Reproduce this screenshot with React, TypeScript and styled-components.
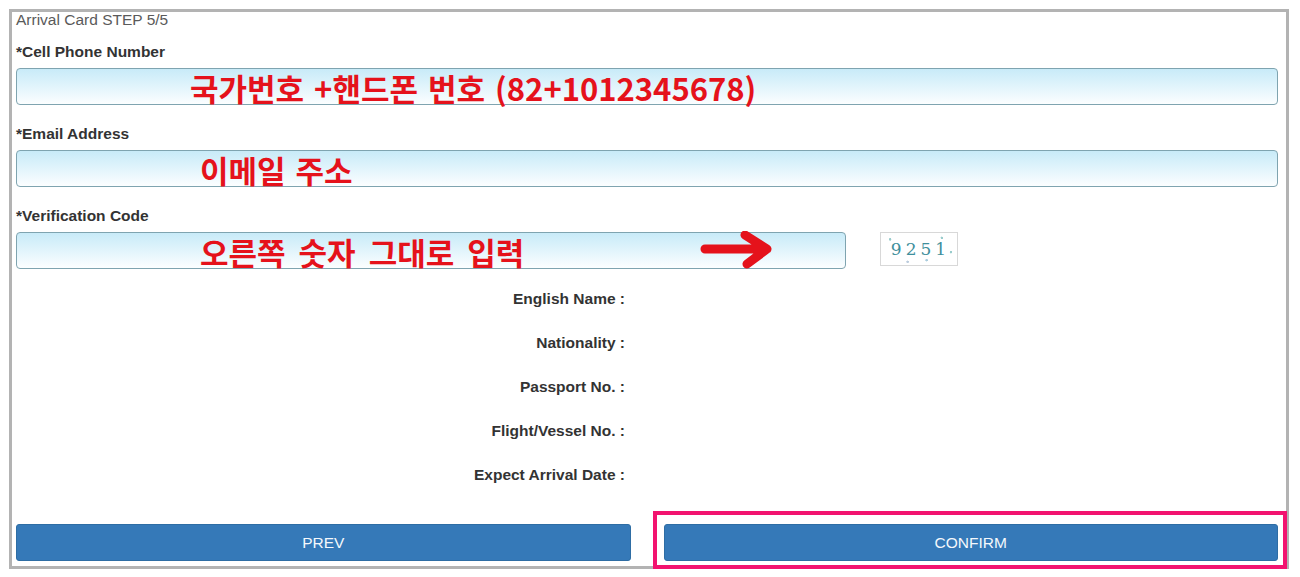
import * as React from 'react'
import styled, { createGlobalStyle } from 'styled-components'

const GlobalStyle = createGlobalStyle`
  html, body {
    margin: 0;
    padding: 0;
    background: #ffffff;
  }
  body {
    font-family: "Liberation Sans", Arial, sans-serif;
  }
`

const Page = styled.div`
  position: relative;
  width: 1300px;
  height: 577px;
  padding: 9px 11px 8px 9px;
  box-sizing: border-box;
`

const Frame = styled.div`
  box-sizing: border-box;
  height: 560px;
  border: 3px solid #b3b3b3;
  padding: 0 8px 0 4px;
  overflow: hidden;
  background: #fff;
`

const StepTitle = styled.div`
  margin-top: -1px;
  font-size: 15.5px;
  line-height: 18px;
  color: #5a5a5a;
`

const Label = styled.div`
  margin-top: 14px;
  font-size: 15.5px;
  line-height: 18px;
  font-weight: bold;
  color: #333;
`

const FieldRow = styled.div<{ $gap?: number }>`
  display: flex;
  align-items: flex-start;
  gap: ${p => p.$gap || 0}px;
  margin-top: 7px;
  margin-bottom: 20px;
`

const Field = styled.div<{ $width?: number }>`
  position: relative;
  flex: ${p => (p.$width ? `0 0 ${p.$width}px` : '1 1 auto')};
`

const Input = styled.div`
  box-sizing: border-box;
  height: 37px;
  border: 1px solid #7fa4b0;
  border-radius: 4px;
  background: linear-gradient(to bottom, #c8ebf8 0%, #e4f5fc 55%, #fcfeff 100%);
`

const Note = styled.span<{ $left: number; $spacing?: number }>`
  position: absolute;
  top: 50%;
  left: ${p => p.$left}px;
  transform: translateY(-50%);
  font-family: "Noto Sans CJK KR", sans-serif;
  font-weight: bold;
  font-size: 31px;
  line-height: 1;
  color: #e5121b;
  white-space: nowrap;
  word-spacing: ${p => p.$spacing || 3}px;
`

const Arrow = styled.svg`
  position: absolute;
  left: 667px;
  top: -1px;
`

const Captcha = styled.div`
  box-sizing: border-box;
  width: 78px;
  height: 34px;
  border: 1px solid #d8d8d8;
  display: flex;
  align-items: center;
  justify-content: center;
  font-family: "DejaVu Serif", serif;
  font-size: 17px;
  letter-spacing: 4px;
  padding-left: 3px;
  color: #3f8f9c;
  background:
    radial-gradient(circle at 12% 20%, #9cc 0 1px, transparent 1.5px),
    radial-gradient(circle at 80% 15%, #9cc 0 1px, transparent 1.5px),
    radial-gradient(circle at 60% 85%, #acd 0 1px, transparent 1.5px),
    radial-gradient(circle at 92% 60%, #9cc 0 1px, transparent 1.5px),
    radial-gradient(circle at 35% 90%, #bcd 0 1px, transparent 1.5px),
    #fff;
`

const Summary = styled.div`
  margin-top: -12px;
  display: grid;
  grid-template-columns: 609px 1fr;
`

const SummaryLabel = styled.div`
  grid-column: 1;
  height: 44px;
  line-height: 44px;
  text-align: right;
  font-size: 15.5px;
  font-weight: bold;
  color: #333;
`

const ButtonBar = styled.div`
  margin-top: 27px;
  display: grid;
  grid-template-columns: 1fr 1fr;
  gap: 33px;
`

const Button = styled.button`
  height: 37px;
  border: 1px solid #2e6da4;
  border-radius: 3px;
  background: #3579b8;
  color: #f4f8fc;
  font-family: "Liberation Sans", Arial, sans-serif;
  font-size: 15.5px;
  text-transform: uppercase;
`

const Highlight = styled.div`
  position: absolute;
  left: 653px;
  top: 511px;
  width: 634px;
  height: 58px;
  box-sizing: border-box;
  border: 4px solid #f2136f;
  pointer-events: none;
`

const summaryItems = [
  'English Name :',
  'Nationality :',
  'Passport No. :',
  'Flight/Vessel No. :',
  'Expect Arrival Date :',
]

export default function App() {
  return (
    <Page>
      <GlobalStyle />
      <Frame>
        <StepTitle>Arrival Card STEP 5/5</StepTitle>

        <Label>*Cell Phone Number</Label>
        <FieldRow>
          <Field>
            <Input />
            <Note $left={174}>국가번호 +핸드폰 번호 (82+1012345678)</Note>
          </Field>
        </FieldRow>

        <Label>*Email Address</Label>
        <FieldRow>
          <Field>
            <Input />
            <Note $left={184}>이메일 주소</Note>
          </Field>
        </FieldRow>

        <Label>*Verification Code</Label>
        <FieldRow $gap={34}>
          <Field $width={830}>
            <Input />
            <Note $left={184} $spacing={6}>오른쪽 숫자 그대로 입력</Note>
            <Arrow width="96" height="40" viewBox="0 0 96 40">
              <path
                d="M22 18 L82 18 M62 4 L84 18 L64 33"
                fill="none"
                stroke="#e5121b"
                strokeWidth="9"
                strokeLinecap="round"
                strokeLinejoin="round"
              />
            </Arrow>
          </Field>
          <Captcha>9251</Captcha>
        </FieldRow>

        <Summary>
          {summaryItems.map(item => (
            <SummaryLabel key={item}>{item}</SummaryLabel>
          ))}
        </Summary>

        <ButtonBar>
          <Button>Prev</Button>
          <Button>Confirm</Button>
        </ButtonBar>
      </Frame>
      <Highlight />
    </Page>
  )
}
